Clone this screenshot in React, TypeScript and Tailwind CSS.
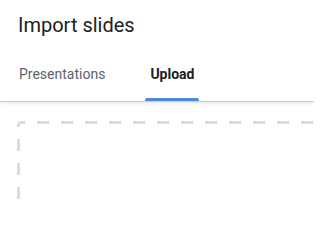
import React from "react";

export default function App() {
    return (
        <div className="relative w-[314px] h-[203px] overflow-hidden bg-white font-['Roboto',sans-serif]">
            {/* Header with title + tabs */}
            <header className="relative z-10 bg-white shadow-[0_1px_1px_rgba(60,64,67,0.18),0_2px_5px_rgba(60,64,67,0.12)]">
                <h1 className="pl-[18px] pt-[11px] text-[20px] leading-7 text-[#202124]">Import slides</h1>
                <nav className="flex gap-[35px] pl-[14px] pt-[1px]">
                    <div className="flex flex-col pt-[24px]">
                        <span className="px-[5px] text-[14px] leading-5 text-[#5f6368]">Presentations</span>
                        <span className="mt-[14px] h-[3px]" />
                    </div>
                    <div className="flex flex-col pt-[24px]">
                        <span className="px-[5px] text-[14px] leading-5 font-bold text-[#202124]">Upload</span>
                        <span className="mt-[14px] h-[3px] rounded-t-[2px] bg-[#5289d6]" />
                    </div>
                </nav>
            </header>

            {/* Drop zone */}
            <div className="pl-[17px] pt-[20px]">
                <div className="relative h-[240px] w-[400px]">
                    <svg className="absolute inset-0" width="400" height="240" fill="none" stroke="#dadce0" strokeWidth="3" strokeDasharray="12 12">
                        <line x1="1.5" y1="1.5" x2="398.5" y2="1.5" strokeDashoffset="5.5" />
                        <line x1="1.5" y1="1.5" x2="1.5" y2="238.5" strokeDashoffset="7.5" />
                        <line x1="398.5" y1="1.5" x2="398.5" y2="238.5" />
                        <line x1="1.5" y1="238.5" x2="398.5" y2="238.5" />
                    </svg>
                </div>
            </div>
        </div>
    );
}
